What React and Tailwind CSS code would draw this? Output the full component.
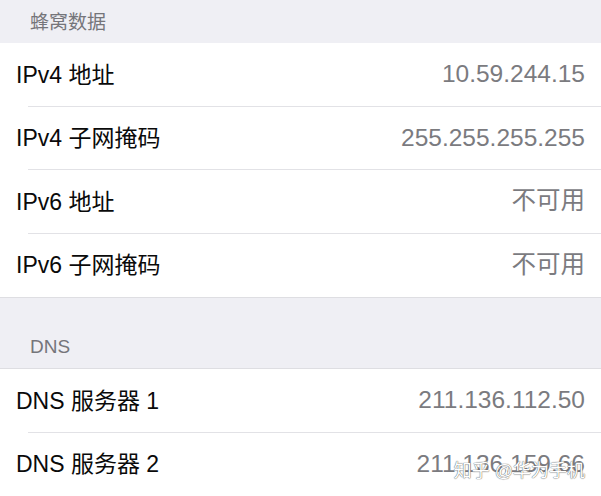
import React from "react";

const font = { fontFamily: '"Liberation Sans", "Noto Sans CJK SC", sans-serif' };

function Row({ label, value, last }) {
  return (
    <div className="relative flex h-[63.5px] items-center justify-between bg-white pl-[16px] pr-[16px]">
      <span className="text-[23px] text-[#0a0a0a]">{label}</span>
      <span className="text-[24.5px] text-[#7b7b7f]">{value}</span>
      {!last && <div className="absolute bottom-0 left-[28px] right-0 h-px bg-[#e2e2e6]" />}
    </div>
  );
}

export default function App() {
  return (
    <div className="h-[496px] w-[601px] overflow-hidden bg-[#efeff4]" style={font}>
      <div className="flex h-[43px] items-center pl-[30px] pt-[4px] text-[19px] text-[#75757a]">蜂窝数据</div>
      <div className="border-b border-[#dedee2]">
        <Row label="IPv4 地址" value="10.59.244.15" />
        <Row label="IPv4 子网掩码" value="255.255.255.255" />
        <Row label="IPv6 地址" value="不可用" />
        <Row label="IPv6 子网掩码" value="不可用" last />
      </div>
      <div className="flex h-[70px] items-end pb-[7px] pl-[30px] text-[19px] text-[#75757a]">DNS</div>
      <div className="relative border-y border-[#dedee2]">
        <Row label="DNS 服务器 1" value="211.136.112.50" />
        <Row label="DNS 服务器 2" value="211.136.159.66" last />
        <div
          className="absolute bottom-[16px] right-[16px] text-[18px] leading-none text-white"
          style={{ textShadow: "0 0 1px #666, 0 0 1px #666" }}
        >
          知乎 @华为手机
        </div>
      </div>
    </div>
  );
}
